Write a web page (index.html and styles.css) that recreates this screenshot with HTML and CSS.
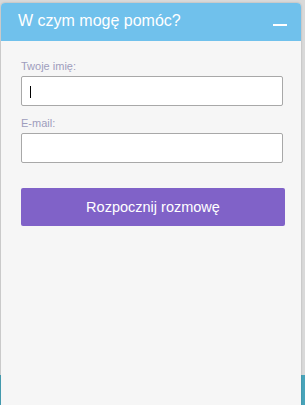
FILE: index.html
```html
<!DOCTYPE html>
<html lang="pl">
<head>
<meta charset="UTF-8">
<meta name="viewport" content="width=device-width, initial-scale=1.0">
<title>Czat</title>
<link rel="stylesheet" href="styles.css">
</head>
<body>
    <div class="chat-widget">
        <div class="chat-header">
            <span class="chat-title">W czym mogę pomóc?</span>
            <span class="minimize"></span>
        </div>
        <form class="chat-form" onsubmit="return false">
            <label for="name">Twoje imię:</label>
            <div class="input-box"><span class="caret"></span></div>
            <label for="email">E-mail:</label>
            <div class="input-box"></div>
            <button type="submit">Rozpocznij rozmowę</button>
        </form>
    </div>
</body>
</html>
```

FILE: styles.css
```css
html, body {
height: 100%;
}

body {
margin: 0;
font-family: "Liberation Sans", Arial, sans-serif;
background: linear-gradient(to bottom, #d9d9d9 0, #d9d9d9 375px, #48a4ba 375px);
overflow: hidden;
}

.chat-widget {
margin: 3px 4px 0 1px;
height: calc(100% - 3px);
background: #f6f6f6;
border-radius: 4px 4px 0 0;
box-shadow: 0 0 2px rgba(0, 0, 0, 0.25);
}

.chat-header {
height: 38px;
background: #70c1ec;
border-radius: 4px 4px 0 0;
display: flex;
align-items: center;
justify-content: space-between;
padding: 0 14px 0 17px;
}

.chat-title {
color: #ffffff;
font-size: 16px;
margin-top: -2px;
}

.minimize {
width: 14px;
height: 2px;
background: #ffffff;
margin-top: 6px;
}

.chat-form {
padding: 19px 16px 0 20px;
}

label {
display: block;
font-size: 11px;
color: #9e9dbd;
margin-bottom: 4px;
}

.input-box {
height: 28px;
width: 260px;
background: #ffffff;
border: 1px solid #a8a8a8;
border-radius: 2px;
margin-bottom: 11px;
position: relative;
}

.caret {
position: absolute;
left: 8px;
top: 9px;
width: 1px;
height: 12px;
background: #000000;
}

button {
display: block;
width: 264px;
height: 38px;
margin-top: 25px;
background: #8062c8;
color: #ffffff;
border: none;
border-radius: 2px;
font-family: "Liberation Sans", Arial, sans-serif;
font-size: 14.5px;
cursor: pointer;
}
```
